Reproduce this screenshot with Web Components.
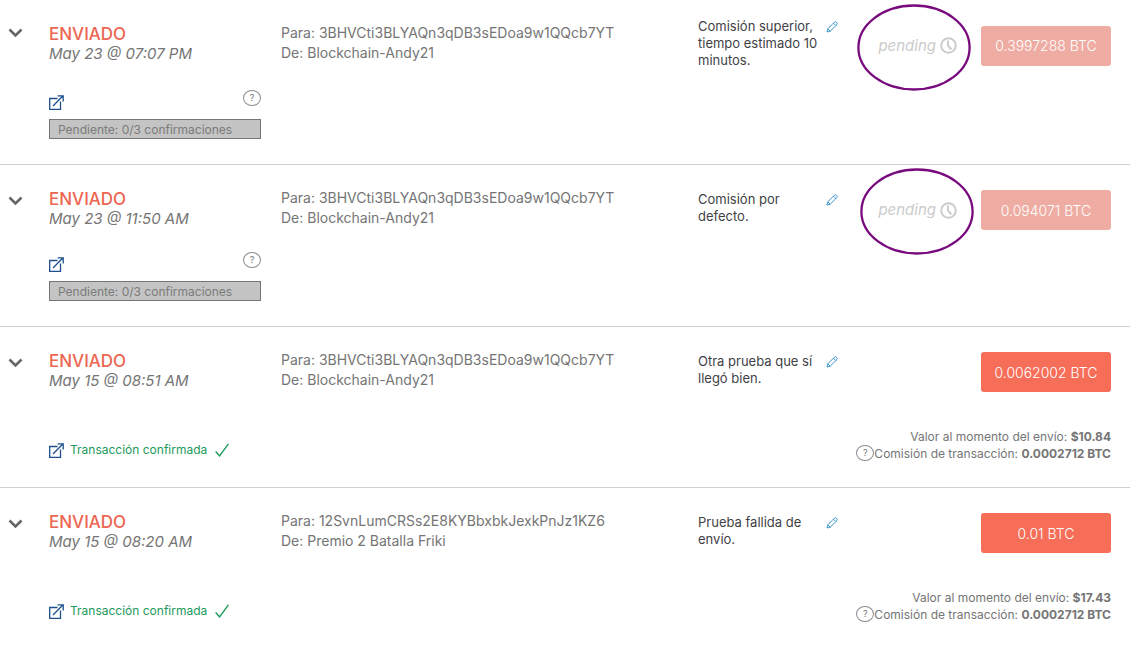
<!DOCTYPE html>
<html lang="es">
<head>
<meta charset="utf-8">
<meta name="viewport" content="width=device-width, initial-scale=1">
<title>Transacciones</title>
<style>
body { margin: 0; background: #fff; color: #757575; font-family: Inter, "Open Sans", sans-serif; }
</style>
</head>
<body>
<tx-list>
  <tx-row tall date="May 23 @ 07:07 PM" to="3BHVCti3BLYAQn3qDB3sEDoa9w1QQcb7YT" from="Blockchain-Andy21">
    <span slot="note">Comisión superior, tiempo estimado 10 minutos.</span>
    <tx-pending slot="state"></tx-pending>
    <tx-amount slot="amount" faded>0.3997288 BTC</tx-amount>
    <tx-progress slot="status">Pendiente: 0/3 confirmaciones</tx-progress>
  </tx-row>
  <tx-row date="May 23 @ 11:50 AM" to="3BHVCti3BLYAQn3qDB3sEDoa9w1QQcb7YT" from="Blockchain-Andy21">
    <span slot="note">Comisión por defecto.</span>
    <tx-pending slot="state" shifted></tx-pending>
    <tx-amount slot="amount" faded>0.094071 BTC</tx-amount>
    <tx-progress slot="status">Pendiente: 0/3 confirmaciones</tx-progress>
  </tx-row>
  <tx-row date="May 15 @ 08:51 AM" to="3BHVCti3BLYAQn3qDB3sEDoa9w1QQcb7YT" from="Blockchain-Andy21">
    <span slot="note">Otra prueba que sí llegó bien.</span>
    <tx-amount slot="amount">0.0062002 BTC</tx-amount>
    <tx-confirmed slot="status">Transacción confirmada</tx-confirmed>
    <tx-costs slot="costs"><b slot="value">$10.84</b><b slot="fee">0.0002712 BTC</b></tx-costs>
  </tx-row>
  <tx-row date="May 15 @ 08:20 AM" to="12SvnLumCRSs2E8KYBbxbkJexkPnJz1KZ6" from="Premio 2 Batalla Friki">
    <span slot="note">Prueba fallida de envío.</span>
    <tx-amount slot="amount">0.01 BTC</tx-amount>
    <tx-confirmed slot="status">Transacción confirmada</tx-confirmed>
    <tx-costs slot="costs"><b slot="value">$17.43</b><b slot="fee">0.0002712 BTC</b></tx-costs>
  </tx-row>
</tx-list>

<script>
const base = `
  *, *::before, *::after { box-sizing: border-box; }
  button { margin: 0; padding: 0; border: 0; background: none; color: inherit; font: inherit; cursor: pointer; }
  svg { display: block; }
`;

function define(name, render) {
  customElements.define(name, class extends HTMLElement {
    constructor() {
      super();
      this.attachShadow({ mode: "open" });
    }
    connectedCallback() {
      this.shadowRoot.innerHTML = `<style>${base}</style>` + render(this);
    }
  });
}

define("tx-list", () => `
  <style>:host { display: block; }</style>
  <slot></slot>
`);

define("tx-help", () => `
  <style>
    :host { display: block; flex: none; }
    button { display: grid; place-items: center; width: 18px; height: 16px; border: 1px solid #8c8c8c; border-radius: 50%;
      color: #757575; font-size: 9px; line-height: 12px; }
  </style>
  <button type="button" aria-label="Ayuda">?</button>
`);

define("tx-link", () => `
  <style>
    :host { display: block; flex: none; }
    a { display: block; color: #1d4f8c; }
  </style>
  <a href="#tx" aria-label="Ver transacción">
    <svg width="15" height="15" viewBox="0 0 15 15" fill="none" stroke="currentColor" stroke-width="1.3">
      <path d="M8.5 3.5H.7v10.8h10.8V6.5"/>
      <path d="M4 11 13.6 1.3M8.6.8h5.6v5.6"/>
    </svg>
  </a>
`);

define("tx-amount", () => `
  <style>
    :host { display: block; flex: none; width: 130px; }
    button { width: 100%; height: 40px; border-radius: 3px; background: #f66d58; color: #fff; font-size: 14px; font-weight: 300; }
    :host([faded]) button { background: #eeaca2; }
  </style>
  <button type="button"><slot></slot></button>
`);

define("tx-pending", () => `
  <style>
    :host { display: flex; position: relative; align-items: center; gap: 4px; flex: none; color: #cbcbcb;
      font-size: 15px; line-height: 18px; font-style: italic; --ring-left: -21px; }
    :host([shifted]) { --ring-left: -18px; }
    .ring { position: absolute; left: var(--ring-left); top: calc(50% - 42px); width: 114px; height: 87px; }
  </style>
  <span>pending</span>
  <svg width="17" height="17" viewBox="0 0 17 17" fill="none" stroke="currentColor">
    <circle cx="8.5" cy="8.5" r="7.3" stroke-width="2"/>
    <path d="M8 3.5V8.5L11.3 12.5" stroke-width="2"/>
  </svg>
  <svg class="ring" viewBox="0 0 114 87" fill="none" stroke="#780a7d" stroke-width="2.3">
    <ellipse cx="57" cy="43.5" rx="55.6" ry="42"/>
  </svg>
`);

define("tx-progress", () => `
  <style>
    :host { display: block; }
    .tools { display: flex; justify-content: space-between; height: 29px; }
    tx-link { margin-top: 5px; }
    .bar { height: 20px; padding: 0 8px; border: 1px solid #757575; background: #c4c4c4; color: #7b7b7b;
      font-size: 12px; line-height: 20px; white-space: nowrap; }
  </style>
  <div class="tools"><tx-link></tx-link><tx-help></tx-help></div>
  <div class="bar"><slot></slot></div>
`);

define("tx-confirmed", () => `
  <style>
    :host { display: flex; align-items: center; gap: 6px; height: 24px; color: #1c9a5b; font-size: 12px; line-height: 18px; white-space: nowrap; }
    .check { margin-left: 2px; }
  </style>
  <tx-link></tx-link>
  <span><slot></slot></span>
  <svg class="check" width="14" height="14" viewBox="0 0 14 14" fill="none" stroke="currentColor" stroke-width="1.4">
    <path d="M.6 8.6 4.6 12.8 13.4.8"/>
  </svg>
`);

define("tx-costs", () => `
  <style>
    :host { display: flex; flex-direction: column; align-items: flex-end; font-size: 12px; line-height: 17px; white-space: nowrap; }
    .fee { display: flex; height: 17px; }
  </style>
  <div>Valor al momento del envío: <slot name="value"></slot></div>
  <div class="fee"><tx-help></tx-help><span>Comisión de transacción: <slot name="fee"></slot></span></div>
`);

define("tx-row", el => `
  <style>
    :host { display: grid; grid-template-columns: 49px 232fr 417fr 413fr; grid-template-rows: minmax(48px, auto) auto;
      padding: 19px 19px 25px 0; border-bottom: 1px solid #cfcfcf; }
    :host([tall]) { padding-top: 17px; grid-template-rows: minmax(53px, auto) auto; }
    :host(:last-of-type) { border-bottom: 0; }
    .toggle { align-self: start; width: 15px; margin: 12px 0 0 8px; color: #666; }
    .head, .peers { align-self: start; margin-top: 5px; font-size: 15px; line-height: 20px; white-space: nowrap; }
    :host([tall]) .toggle { margin-top: 11px; }
    :host([tall]) .head { margin-top: 7px; }
    h2 { margin: 0; color: #ec6651; font-size: 17px; line-height: 20px; font-weight: 500; }
    time { display: block; font-style: italic; }
    .peers { margin-top: 4px; font-size: 14px; }
    :host([tall]) .peers { margin-top: 6px; }
    .side { display: flex; align-items: center; }
    .note { display: flex; align-items: flex-start; gap: 6px; color: #3f3f46; font-size: 13px; line-height: 17px; }
    .note p { width: 122px; margin: 0; }
    .edit { margin-top: 3px; color: #3d97cf; }
    .end { display: flex; align-items: center; gap: 24px; margin: 4px 0 0 auto; }
    .status { grid-column: 2; align-self: end; margin: 20px 20px 0 0; }
    .costs { grid-column: 3 / -1; align-self: end; margin-top: 34px; }
  </style>
  <button class="toggle" type="button" aria-label="Desplegar">
    <svg width="15" height="10" viewBox="0 0 15 10" fill="none" stroke="currentColor" stroke-width="2.6"><path d="M1.5 1.5 7.5 7.5 13.5 1.5"/></svg>
  </button>
  <div class="head"><h2>ENVIADO</h2><time>${el.getAttribute("date")}</time></div>
  <div class="peers"><div>Para: ${el.getAttribute("to")}</div><div>De: ${el.getAttribute("from")}</div></div>
  <div class="side">
    <div class="note">
      <p><slot name="note"></slot></p>
      <button class="edit" type="button" aria-label="Editar nota">
        <svg width="12" height="12" viewBox="0 0 12 12" fill="none" stroke="currentColor" stroke-width="1"><path d="M1 11 1.8 7.8 8.6 1Q9.5.3 10.6 1.3T11 3.4L4.2 10.2ZM1.8 7.8 4.2 10.2M7.4 2.2 9.8 4.6"/></svg>
      </button>
    </div>
    <div class="end"><slot name="state"></slot><slot name="amount"></slot></div>
  </div>
  <div class="status"><slot name="status"></slot></div>
  <div class="costs"><slot name="costs"></slot></div>
`);
</script>
</body>
</html>
